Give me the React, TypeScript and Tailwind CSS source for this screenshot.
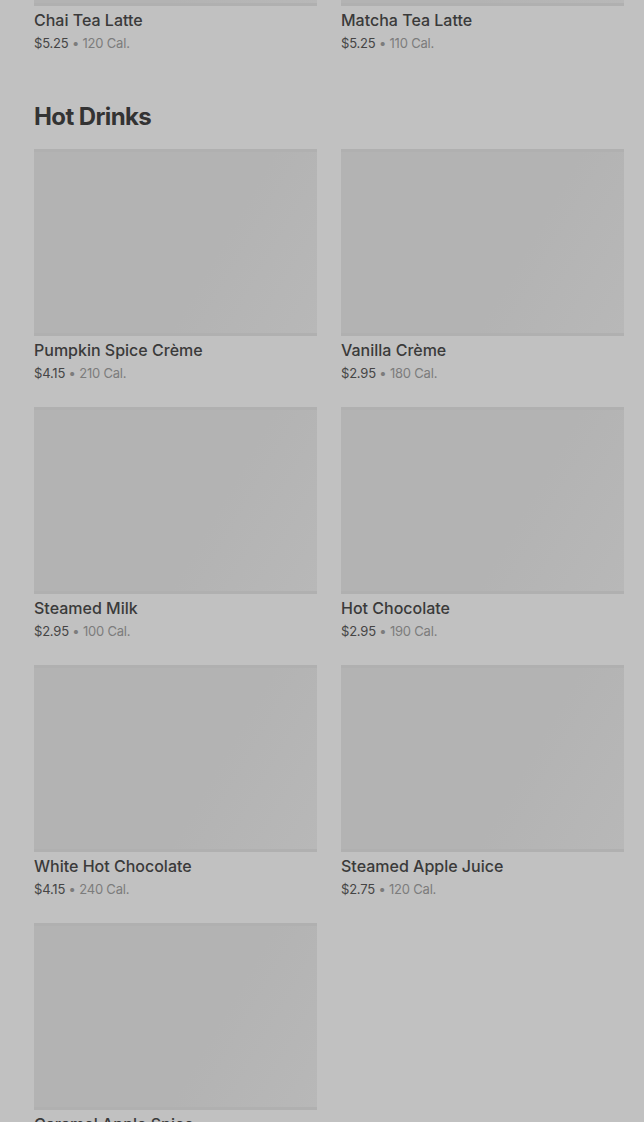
type Item = { name: string; price: string; cal: string };

const previous: Item[] = [
  { name: "Chai Tea Latte", price: "$5.25", cal: "120 Cal." },
  { name: "Matcha Tea Latte", price: "$5.25", cal: "110 Cal." },
];

const hotDrinks: Item[] = [
  { name: "Pumpkin Spice Crème", price: "$4.15", cal: "210 Cal." },
  { name: "Vanilla Crème", price: "$2.95", cal: "180 Cal." },
  { name: "Steamed Milk", price: "$2.95", cal: "100 Cal." },
  { name: "Hot Chocolate", price: "$2.95", cal: "190 Cal." },
  { name: "White Hot Chocolate", price: "$4.15", cal: "240 Cal." },
  { name: "Steamed Apple Juice", price: "$2.75", cal: "120 Cal." },
  { name: "Caramel Apple Spice", price: "$4.15", cal: "300 Cal." },
];

function Card({ item }: { item: Item }) {
  return (
    <div className="flex flex-col">
      <div className="h-[187px] w-full bg-[linear-gradient(120deg,#b3b3b3_0%,#b3b3b3_62%,#b8b8b8_100%)] border-y-[3px] border-y-[#b0b0b0]" />
      <div className="mt-1 text-[16px] leading-5 font-medium text-[#3a3a3a]">{item.name}</div>
      <div className="mt-[3px] text-[13px] leading-5 tracking-[-0.2px]">
        <span className="text-[#454545]">{item.price}</span>
        <span className="text-[#7c7c7c]"> • {item.cal}</span>
      </div>
    </div>
  );
}

function Grid({ items }: { items: Item[] }) {
  return (
    <div className="grid grid-cols-2 gap-x-6 gap-y-6">
      {items.map((item) => (
        <Card key={item.name} item={item} />
      ))}
    </div>
  );
}

export default function App() {
  return (
    <div className="min-h-[1122px] h-[1122px] overflow-hidden bg-[#c1c1c1] pl-[34px] pr-[20px] font-['Inter',sans-serif]">
      {/* page is scrolled: the tea section's last row sits at the top */}
      <div className="-mt-[181px]">
        <Grid items={previous} />
      </div>

      <section className="mt-12">
        <h2 className="text-[24px] leading-8 font-bold tracking-[-0.6px] text-[#333333] mb-4">
          Hot Drinks
        </h2>
        <Grid items={hotDrinks} />
      </section>
    </div>
  );
}
